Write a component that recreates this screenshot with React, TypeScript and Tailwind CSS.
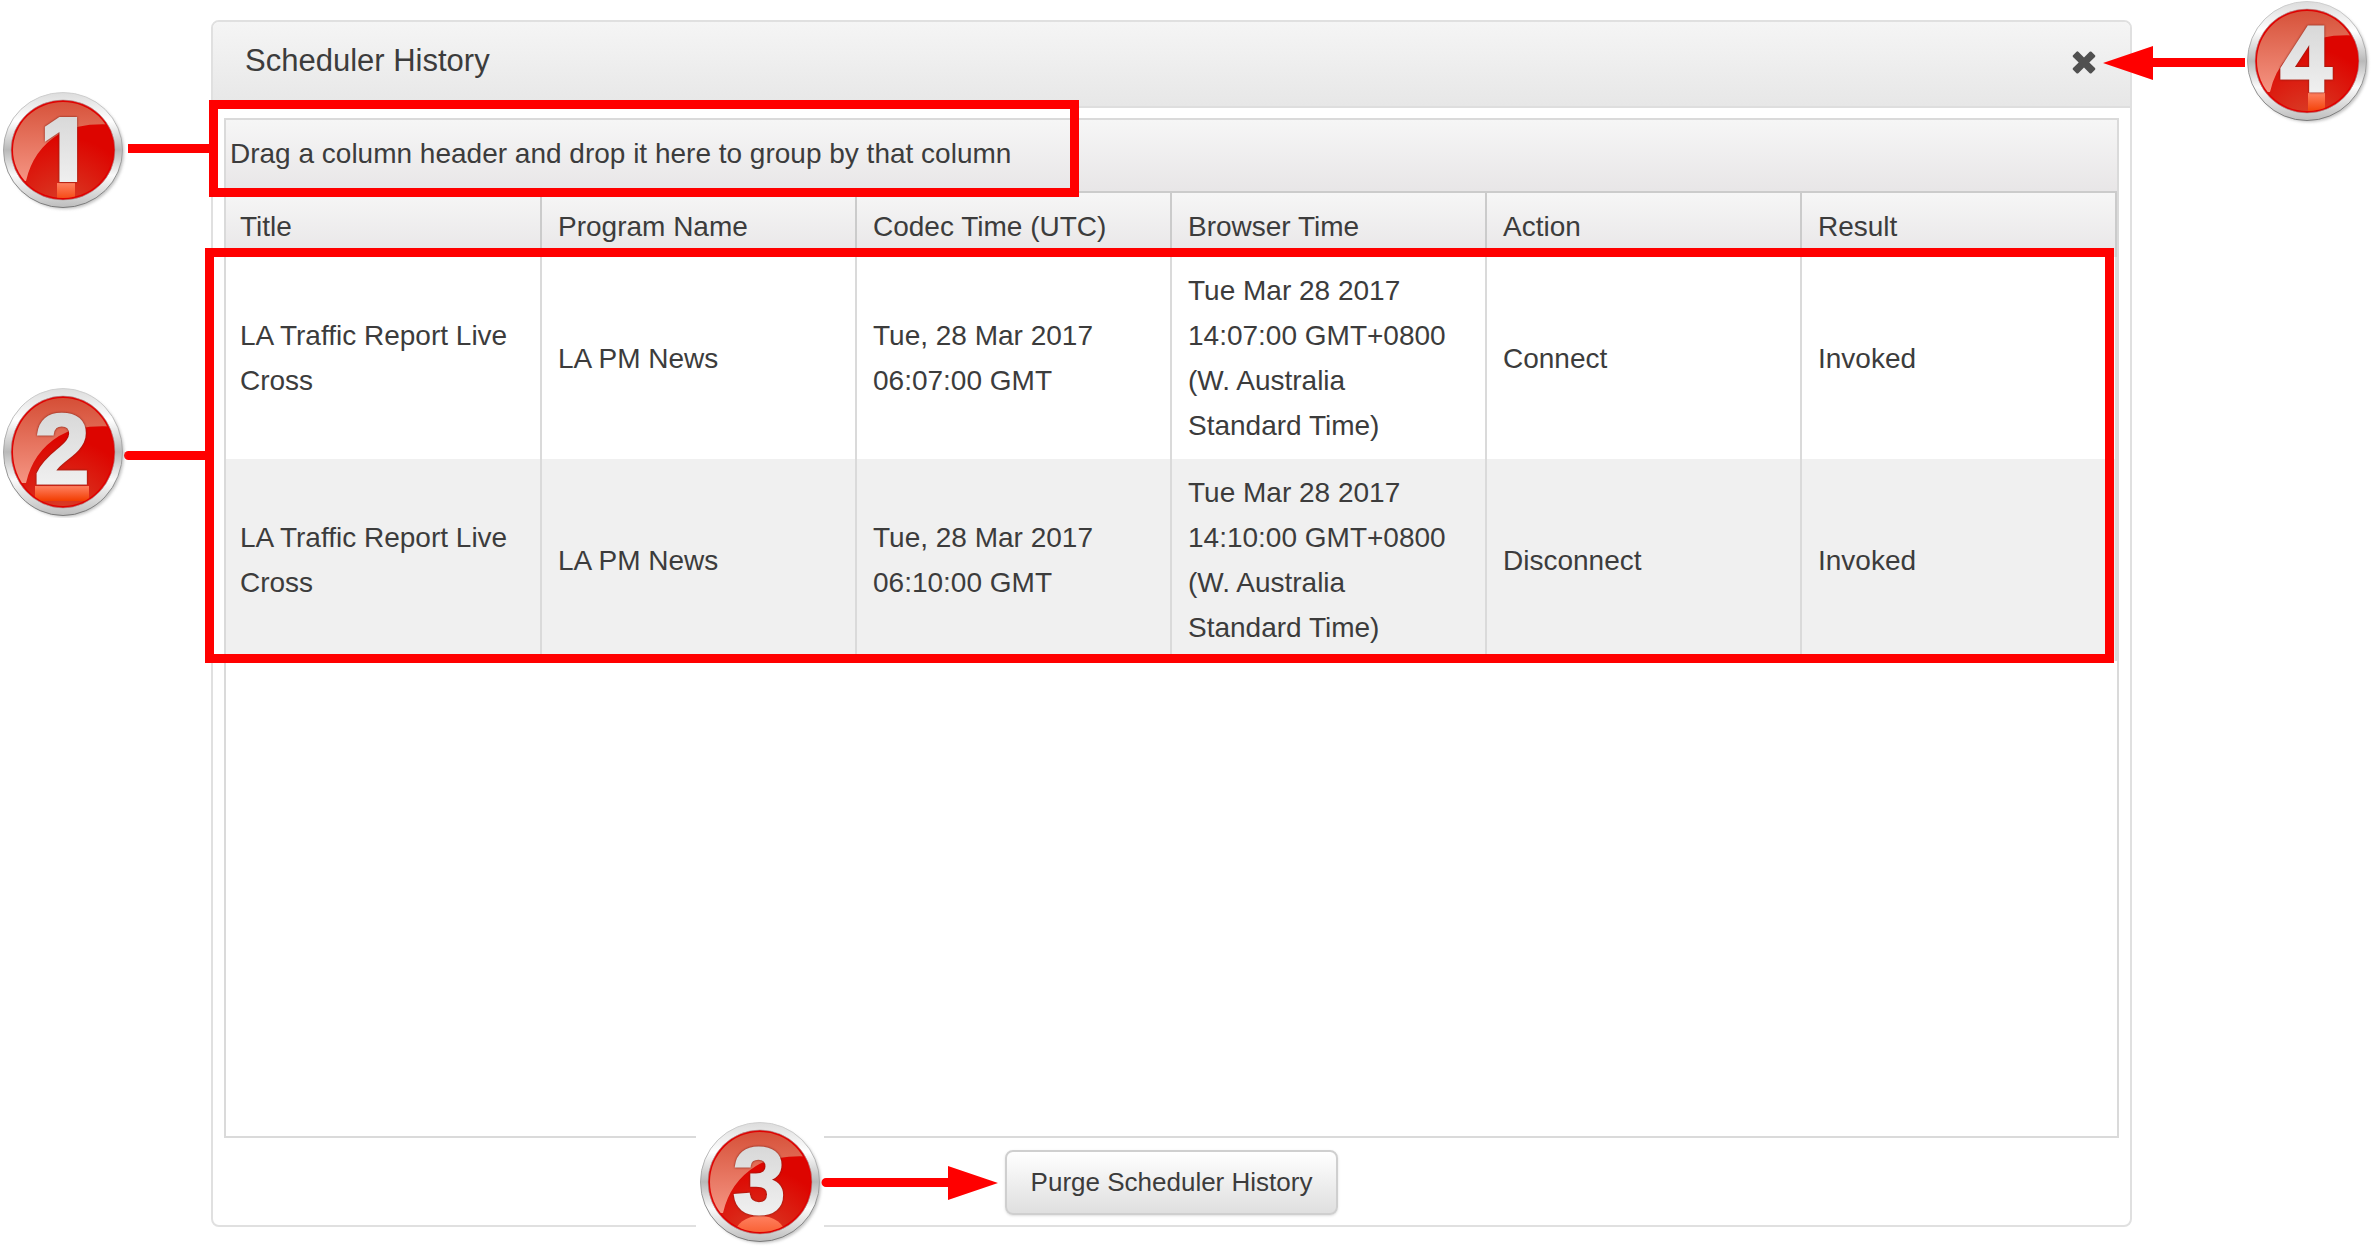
import type { ReactNode } from 'react';

const columns = ['Title', 'Program Name', 'Codec Time (UTC)', 'Browser Time', 'Action', 'Result'];

const rows = [
  {
    title: 'LA Traffic Report Live Cross',
    program: 'LA PM News',
    codecTime: 'Tue, 28 Mar 2017 06:07:00 GMT',
    browserTime: 'Tue Mar 28 2017 14:07:00 GMT+0800 (W. Australia Standard Time)',
    action: 'Connect',
    result: 'Invoked',
  },
  {
    title: 'LA Traffic Report Live Cross',
    program: 'LA PM News',
    codecTime: 'Tue, 28 Mar 2017 06:10:00 GMT',
    browserTime: 'Tue Mar 28 2017 14:10:00 GMT+0800 (W. Australia Standard Time)',
    action: 'Disconnect',
    result: 'Invoked',
  },
];

type BadgeProps = {
  n: number;
  ry?: number;
  size: number;
  baseline: number;
  x?: number;
  digitClass?: string;
  className: string;
  children: ReactNode;
};

// Glossy numbered callout, children are the reflection under the digit
const Badge = ({
  n,
  ry = 60,
  size,
  baseline,
  x = 63,
  digitClass = "font-['Liberation_Sans',sans-serif] font-bold stroke-3",
  className,
  children,
}: BadgeProps) => (
  <svg viewBox="0 0 128 132" className={`absolute h-[132px] w-[128px] ${className}`} role="img" aria-label={`Callout ${n}`}>
    <defs>
      <linearGradient id={`ring${n}`} x1="0" y1="0" x2="0" y2="1">
        <stop offset="0" stopColor="#dcdcdc" />
        <stop offset="0.25" stopColor="#fff" />
        <stop offset="0.5" stopColor="#b9b9b9" />
        <stop offset="0.72" stopColor="#fafafa" />
        <stop offset="1" stopColor="#bdbdbd" />
      </linearGradient>
      <linearGradient id={`edge${n}`} x1="0" y1="0" x2="0" y2="1">
        <stop offset="0" stopColor="#d0d0d0" />
        <stop offset="1" stopColor="#7a7a7a" />
      </linearGradient>
      <radialGradient id={`red${n}`} cx="0.5" cy="1" r="0.6">
        <stop offset="0" stopColor="#d8452c" />
        <stop offset="1" stopColor="#dd0500" />
      </radialGradient>
      <linearGradient id={`gloss${n}`} x1="0" y1="0" x2="0" y2="1">
        <stop offset="0" stopColor="#d0452c" />
        <stop offset="1" stopColor="#f59482" />
      </linearGradient>
      <linearGradient id={`digit${n}`} x1="0" y1="0" x2="0" y2="1">
        <stop offset="0" stopColor="#d2d2d2" />
        <stop offset="1" stopColor="#f6f6f6" />
      </linearGradient>
      <linearGradient id={`glow${n}`} x1="0" y1="0" x2="0" y2="1">
        <stop offset="0" stopColor="#ff8060" />
        <stop offset="1" stopColor="#f23c00" />
      </linearGradient>
      <clipPath id={`disc${n}`}>
        <ellipse cx="64" cy="66" rx="50" ry={ry - 10} />
      </clipPath>
      <filter id={`shadow${n}`} x="-20%" y="-20%" width="140%" height="140%">
        <feGaussianBlur stdDeviation="1.5" />
      </filter>
    </defs>
    <ellipse cx="66" cy="68" rx="59" ry={ry - 1} fill="#999" opacity="0.6" filter={`url(#shadow${n})`} />
    <ellipse cx="64" cy="66" rx="59.5" ry={ry - 0.5} fill={`url(#ring${n})`} stroke={`url(#edge${n})`} />
    <ellipse cx="64" cy="66" rx="52" ry={ry - 8} fill="#e00000" stroke="#a99" strokeWidth="0.6" />
    <g clipPath={`url(#disc${n})`}>
      <rect width="128" height="132" fill={`url(#red${n})`} />
      <path d="M0 0H128V42Q84 36 60 50Q34 66 27 97L0 97Z" fill={`url(#gloss${n})`} />
      <g fill={`url(#glow${n})`}>{children}</g>
    </g>
    <text
      x={x}
      y={baseline}
      textAnchor="middle"
      fontSize={size}
      fill={`url(#digit${n})`}
      stroke={`url(#digit${n})`}
      className={`drop-shadow-[0_0_1px_#7a1a10] ${digitClass}`}
    >
      {n}
    </text>
  </svg>
);

const HistoryTable = () => (
  <table className="w-full table-fixed border-collapse text-left text-[28px] leading-[45px]">
    <thead className="bg-linear-to-b from-[#f6f6f6] to-[#e8e6e7]">
      <tr>
        {columns.map((c) => (
          <th key={c} className="border-r-2 border-[#cbcbcb] px-4 pt-[11px] pb-2 font-normal first:pl-3.5">{c}</th>
        ))}
      </tr>
    </thead>
    <tbody>
      {rows.map((r) => (
        <tr key={r.codecTime} className="even:bg-[#f0f0f0]">
          {Object.values(r).map((v, i) => (
            <td key={i} className="border-r-2 border-[#dadada] py-[11px] pr-7 pl-4 first:pl-3.5">{v}</td>
          ))}
        </tr>
      ))}
    </tbody>
  </table>
);

export default function App() {
  return (
    <main className="flex min-h-screen flex-col bg-white py-5 pr-[240px] pl-[211px] font-['Liberation_Sans',Arial,sans-serif] text-[#3c3c3c]">
      <section className="relative flex flex-1 flex-col rounded-lg border-2 border-[#e0e0e0] bg-white" aria-labelledby="dialog-title">
        <header className="flex items-start justify-between rounded-t-md border-b-2 border-[#dedede] bg-linear-to-b from-[#f5f5f5] to-[#e7e7e7] pt-4 pr-8 pb-[23px] pl-8">
          <h1 id="dialog-title" className="text-[31px] leading-[45px]">Scheduler History</h1>
          <button type="button" aria-label="Close" className="mt-3 h-7 w-7">
            <svg viewBox="0 0 28 28" className="h-7 w-7" fill="#505050">
              <path d="M6.5 1.7Q7.4 1 8.3 1.8L14 7.5L19.7 1.8Q20.6 1 21.5 1.8L25 5.2Q25.8 6 25 6.9L19.3 12.5L25 18.1Q25.8 19 25 19.8L21.5 23.2Q20.6 24 19.7 23.2L14 17.5L8.3 23.2Q7.4 24 6.5 23.2L3 19.8Q2.2 19 3 18.1L8.7 12.5L3 6.9Q2.2 6 3 5.2Z" />
            </svg>
          </button>
        </header>

        <div className="mx-[11px] mt-2.5 flex flex-1 flex-col border-2 border-[#dadada]">
          <div className="relative border-b-2 border-[#cbcbcb] bg-linear-to-b from-[#f6f6f6] to-[#e8e6e7] px-1 pt-[11px] pb-[15px] text-[28px] leading-[45px]">
            Drag a column header and drop it here to group by that column
            <div className="absolute -top-5 -bottom-1.5 -left-[17px] z-10 w-[870px] border-9 border-[#ff0000]">
              <div className="absolute top-[35px] right-full mr-[9px] h-[9px] w-[81px] bg-[#ff0000]" />
              <Badge
                n={1}
                ry={58}
                size={89}
                baseline={98}
                x={62}
                digitClass="font-['Inter',sans-serif] font-black stroke-0"
                className="-top-[25px] -left-[219px]"
              >
                <rect x="58" y="99" width="18" height="20" />
              </Badge>
            </div>
          </div>

          <div className="relative">
            <HistoryTable />
            <div className="absolute top-[55px] right-[3px] -bottom-0.5 -left-[21px] border-9 border-[#ff0000]">
              <div className="absolute top-[194px] right-full mr-[9px] h-[9px] w-[81px] rounded-l-full bg-[#ff0000]" />
              <Badge n={2} ry={64} size={98} baseline={97} className="top-[129px] -left-[215px]">
                <rect x="36" y="100" width="54" height="15" />
              </Badge>
            </div>
          </div>
        </div>

        <footer className="flex justify-center pt-3 pb-2.5">
          <div className="relative">
            <button
              type="button"
              className="h-[65px] rounded-lg border-2 border-[#cfcfcf] bg-linear-to-b from-white to-[#dfdfdf] px-6 text-[26px] shadow-sm"
            >
              Purge Scheduler History
            </button>
            <Badge n={3} size={93} baseline={97} className="-top-[34px] right-full mr-[181px] bg-white">
              <ellipse cx="64" cy="118" rx="25" ry="18" />
            </Badge>
            <svg viewBox="0 0 177 34" className="absolute top-4 right-full mr-[7px] h-[34px] w-[177px]" fill="#ff0000" aria-hidden="true">
              <path d="M5 12H127V0L177 17L127 34V21H5A4.5 4.5 0 0 1 5 12Z" />
            </svg>
          </div>
        </footer>

        <svg viewBox="0 0 142 34" className="absolute top-6 -right-[115px] h-[34px] w-[142px]" fill="#ff0000" aria-hidden="true">
          <path d="M142 12H50V0L0 17L50 34V21H142Z" />
        </svg>
        <Badge n={4} size={92} baseline={96} className="-top-[27px] -right-[241px]">
          <rect x="65" y="98" width="17" height="20" />
        </Badge>
      </section>
    </main>
  );
}
